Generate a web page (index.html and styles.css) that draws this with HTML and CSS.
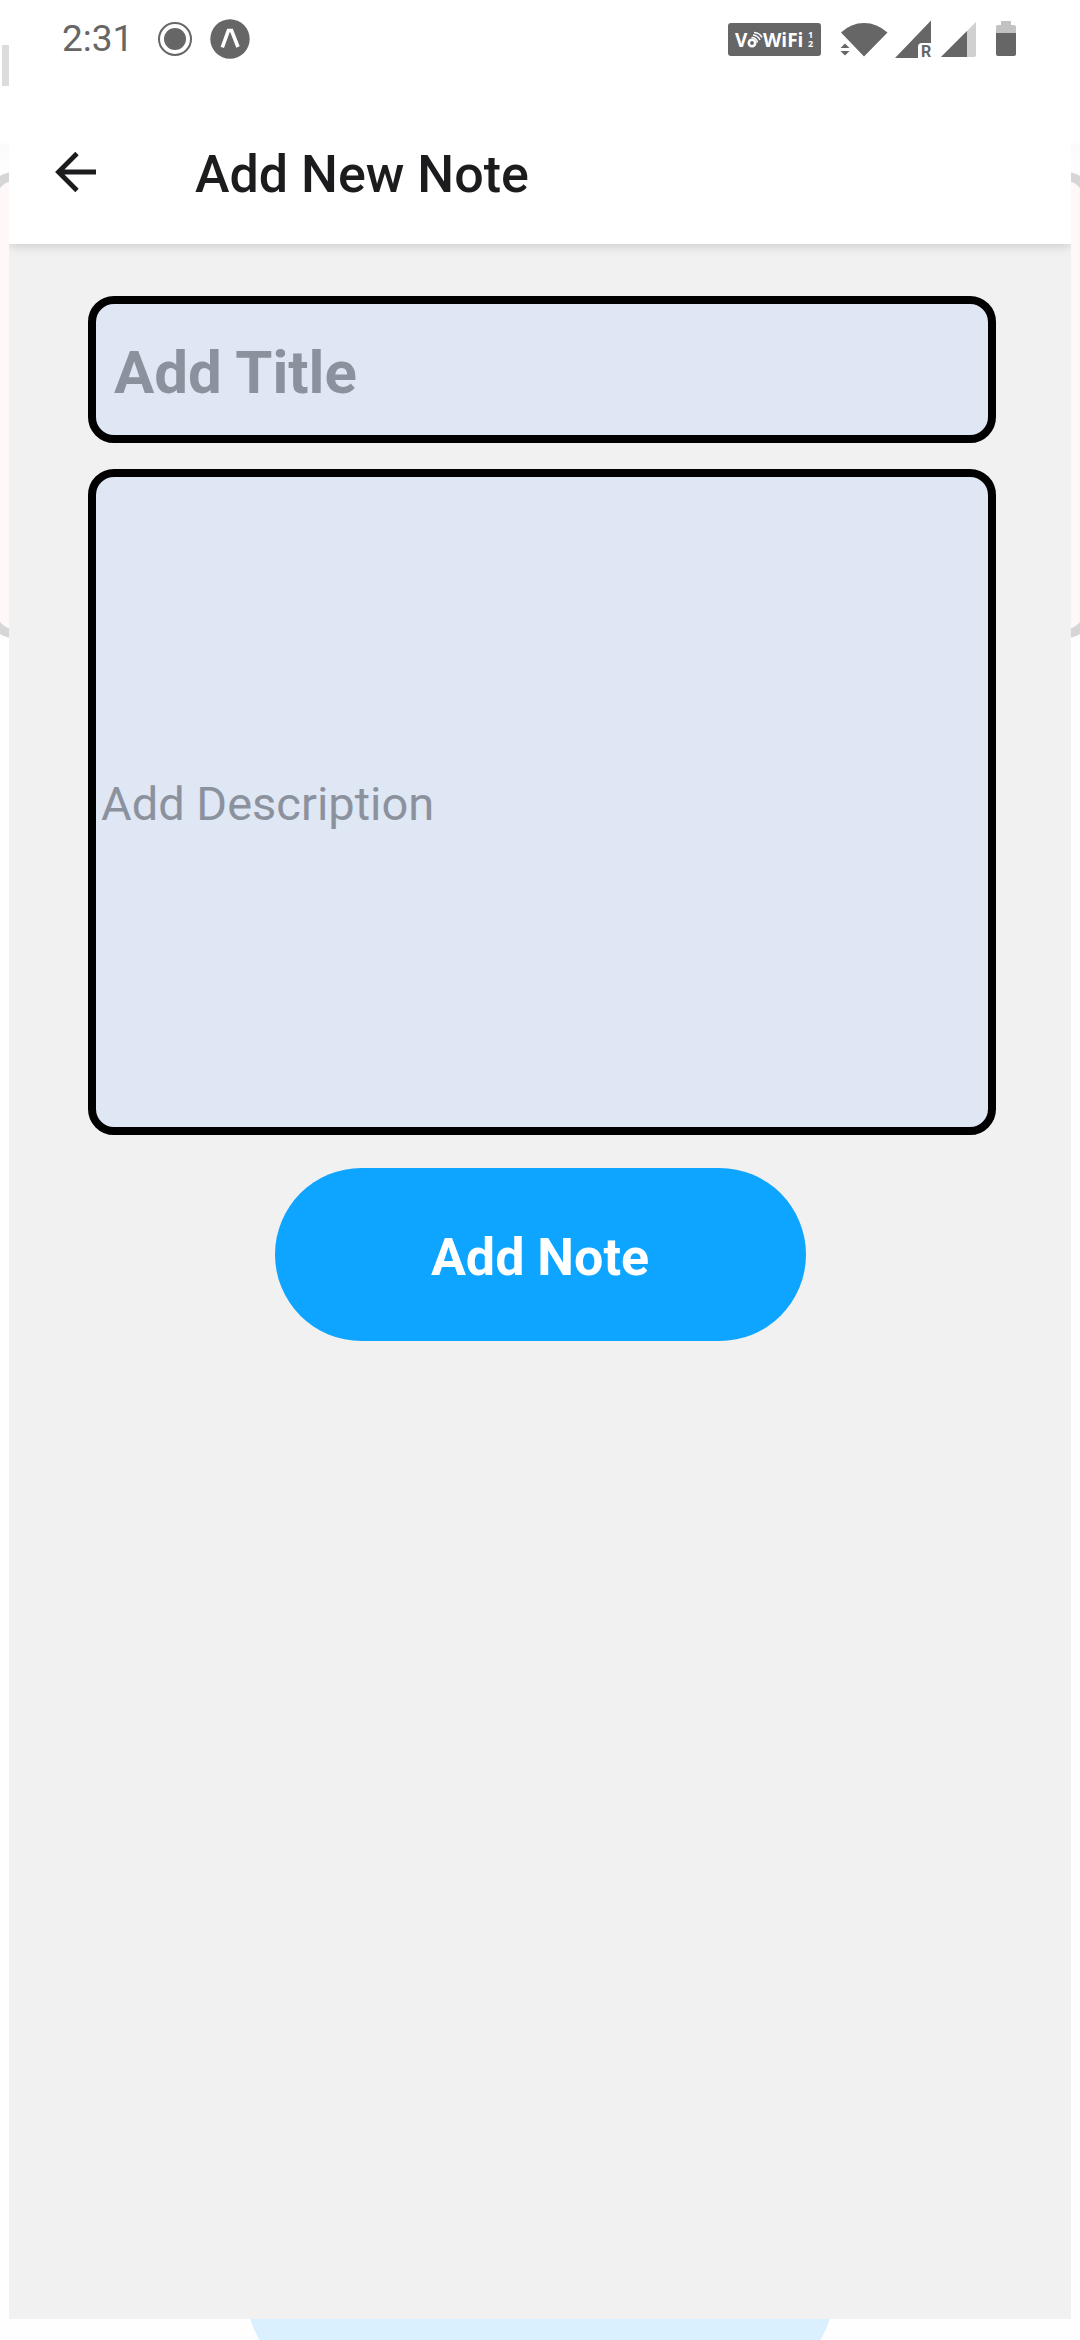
FILE: index.html
```html
<!DOCTYPE html>
<html lang="en">
<head>
<meta charset="utf-8">
<meta name="viewport" content="width=device-width, initial-scale=1">
<title>Add New Note</title>
<link rel="stylesheet" href="styles.css">
</head>
<body>
<!-- Previous screen, still visible round the edges of the sheet -->
<div class="backdrop" aria-hidden="true">
  <div class="backdrop-mark"></div>
  <div class="backdrop-card"></div>
  <div class="backdrop-button"></div>
</div>

<div class="status-bar">
  <span class="clock">2:31</span>
  <svg class="status-dot" width="36" height="36" viewBox="0 0 36 36" aria-hidden="true">
    <circle cx="18" cy="18" r="16" fill="none" stroke="#666" stroke-width="2"/>
    <circle cx="18" cy="18" r="11" fill="#666"/>
  </svg>
  <svg width="40" height="40" viewBox="0 0 40 40" aria-hidden="true">
    <circle cx="20" cy="20" r="19.700" fill="#666"/>
    <path d="M12.300 28.400 18.400 11.500H21.600L28 28" fill="none" stroke="#fff" stroke-width="3.600"/>
  </svg>
  <svg class="status-right" width="93" height="33" viewBox="0 0 93 33" role="img" aria-label="VoWiFi 1 2">
    <rect width="93" height="33" rx="3" fill="#666"/>
    <text class="badge-text" x="7" y="24">V</text>
    <circle cx="24" cy="20" r="3.200" fill="none" stroke="#fff" stroke-width="2.600"/>
    <path d="M23.500 14.500q5 0 6 5M25 12q5 .5 7 5M26 9.500q6 .5 8 5" fill="none" stroke="#fff" stroke-width="1.500"/>
    <text class="badge-text" x="35" y="24">WiFi</text>
    <text class="badge-sim" x="80" y="15">1</text>
    <text class="badge-sim" x="80" y="24">2</text>
  </svg>
  <svg class="wifi" width="48" height="40" viewBox="0 0 48 40" aria-hidden="true">
    <path d="M1 13.500Q11 4 24 4T47.500 13.500L24 37.500Z" fill="#666"/>
    <path d="M5 24.500 9.500 29H.5ZM5 36.500 9.500 32H.5Z" fill="#666"/>
  </svg>
  <svg class="signal" width="40" height="44" viewBox="0 -2 40 44" aria-hidden="true">
    <path d="M0 39 36 1.500V24H27Q23 24 23 28V39Z" fill="#666"/>
    <text class="roaming" x="26" y="38">R</text>
  </svg>
  <svg class="signal-two" width="36" height="40" viewBox="0 0 36 40" aria-hidden="true">
    <path d="M0 38 35 3V36Q35 38 33 38Z" fill="#d0d0d0"/>
    <path d="M0 38 26 12V38Z" fill="#666"/>
  </svg>
  <svg width="20" height="36" viewBox="0 0 20 36" aria-hidden="true">
    <path d="M5 0H15V4H18Q20 4 20 6V13H0V6Q0 4 2 4H5Z" fill="#c2c2c2"/>
    <path d="M0 12H20V33Q20 35 18 35H2Q0 35 0 33Z" fill="#666"/>
  </svg>
</div>

<main class="sheet">
  <header class="app-bar">
    <button class="back" type="button" aria-label="Back">
      <svg width="42" height="42" viewBox="0 0 42 42" aria-hidden="true">
        <path d="M41 21H4M22 2.500 3.500 21 22 39.500" fill="none" stroke="#1c1c1e" stroke-width="4.800"/>
      </svg>
    </button>
    <h1 class="title">Add New Note</h1>
  </header>
  <form class="note-form">
    <input class="field field-title" type="text" placeholder="Add Title" aria-label="Title">
    <input class="field field-description" type="text" placeholder="Add Description" aria-label="Description">
    <button class="submit" type="button">Add Note</button>
  </form>
</main>
</body>
</html>
```
FILE: styles.css
```css
* {
  box-sizing: border-box;
}

body {
  position: relative;
  display: flex;
  flex-direction: column;
  min-height: 100vh;
  margin: 0;
  background: #fff;
  font-family: Roboto, "Liberation Sans", sans-serif;
}

/* Previous screen */
.backdrop {
  position: absolute;
  inset: 0;
  overflow: hidden;
  background: linear-gradient(#fff 143px, #fafafa 144px, #fefefe 172px);
}

.backdrop-mark {
  position: absolute;
  top: 45px;
  left: 2px;
  width: 12px;
  height: 41px;
  background: #dcdcdc;
}

.backdrop-card {
  position: absolute;
  top: 172px;
  left: -12px;
  right: -12px;
  height: 466px;
  border: 9px solid #d6d6d6;
  border-radius: 26px;
  background: #fff8f8;
}

.backdrop-button {
  position: absolute;
  bottom: -42px;
  left: 247px;
  right: 247px;
  height: 174px;
  border-radius: 87px;
  background: #daf0ff;
}

/* Status bar */
.status-bar {
  position: relative;
  display: flex;
  align-items: center;
  height: 78px;
  margin: 0 9px;
  padding: 0 55px 0 53px;
  background: #fff;
}

.clock {
  color: #666;
  font-size: 37px;
  line-height: 44px;
}

.status-dot {
  margin: 0 17px 0 24px;
}

.status-right {
  margin-left: auto;
}

.badge-text {
  fill: #fff;
  font: 700 19px "Open Sans", sans-serif;
}

.badge-sim {
  fill: #fff;
  font: 700 9px "Open Sans", sans-serif;
}

.wifi {
  margin-left: 19px;
}

.signal {
  margin-left: 7px;
}

.roaming {
  fill: #666;
  font: 700 16px Roboto, sans-serif;
}

.signal-two {
  margin: 0 19px 0 6px;
}

/* Sheet */
.sheet {
  position: relative;
  flex: 1;
  margin: 0 9px 21px;
  background: #f1f1f1;
}

.app-bar {
  display: flex;
  align-items: center;
  gap: 98px;
  height: 166px;
  padding: 22px 46px 0;
  background: #fff;
  box-shadow: 0 2px 10px rgba(0, 0, 0, 0.16);
  clip-path: inset(0 0 -16px 0);
}

.back {
  display: flex;
  padding: 0;
  border: 0;
  background: none;
}

.title {
  margin: 0;
  padding-top: 5px;
  color: #1c1c1e;
  font-size: 52px;
  font-weight: 500;
  line-height: 60px;
}

.note-form {
  display: flex;
  flex-direction: column;
  gap: 26px;
  padding-top: 52px;
}

.field {
  margin: 0 75px 0 79px;
  border: 8px solid #000;
  border-radius: 26px;
  outline: 0;
  background: #dfe6f4;
  color: #1c1c1e;
  font-family: inherit;
}

.field::placeholder {
  color: #8c929d;
  opacity: 1;
}

.field-title {
  height: 147px;
  padding: 5px 18px 0;
  font-size: 60px;
  font-weight: 700;
}

.field-description {
  height: 666px;
  padding: 2px 5px 0;
  font-size: 47px;
}

.submit {
  align-self: center;
  width: 50%;
  height: 173px;
  margin-top: 7px;
  padding: 5px 0 0;
  border: 0;
  border-radius: 87px;
  background: #0da5ff;
  color: #fff;
  font-family: inherit;
  font-size: 52px;
  font-weight: 700;
}
```
